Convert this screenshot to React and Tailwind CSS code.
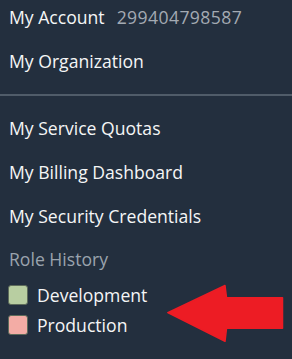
import React from 'react';

const MenuRow = ({ children }) => (
  <div className="flex h-11 items-center px-[9px] text-[17.6px] text-[#f5f6f6]">{children}</div>
);

const RoleRow = ({ color, label }) => (
  <div className="flex h-[30px] items-center gap-[9px] px-[8px] text-[17.6px] text-[#f5f6f6]">
    <span className={`block h-[20px] w-[20px] rounded-[3px] border border-[#5d6b5a] ${color}`} />
    <span>{label}</span>
  </div>
);

export default function App() {
  return (
    <div
      className="relative h-[359px] w-[292px] overflow-hidden bg-[#232f3e]"
      style={{ fontFamily: '"Open Sans", "Noto Sans", sans-serif' }}
    >
      <div className="-mt-[5px] flex flex-col">
        <MenuRow>
          <span>My Account</span>
          <span className="ml-[12px] tracking-[0.4px] text-[#a3aab3]">299404798587</span>
        </MenuRow>
        <MenuRow>My Organization</MenuRow>
        <div className="mt-[11px] mb-[10px] h-[2px] bg-[#505c69]" />
        <MenuRow>My Service Quotas</MenuRow>
        <MenuRow>My Billing Dashboard</MenuRow>
        <MenuRow>My Security Credentials</MenuRow>
        <div className="flex h-[42px] items-center px-[9px] text-[17.6px] text-[#9aa3ad]">Role History</div>
        <RoleRow color="bg-[#b8cea1]" label="Development" />
        <RoleRow color="bg-[#f3aca5]" label="Production" />
      </div>

      <svg
        className="absolute left-[166px] top-[284px]"
        width="118"
        height="59"
        viewBox="0 0 118 59"
      >
        <path
          d="M1.8 28.7 L59 1.5 L60.5 13.7 L116.5 13.7 L116.5 44.3 L60.5 44.3 L59 57.3 Z"
          fill="#ed1c24"
          stroke="#ed1c24"
          strokeWidth="1.5"
          strokeLinejoin="round"
        />
      </svg>
    </div>
  );
}
